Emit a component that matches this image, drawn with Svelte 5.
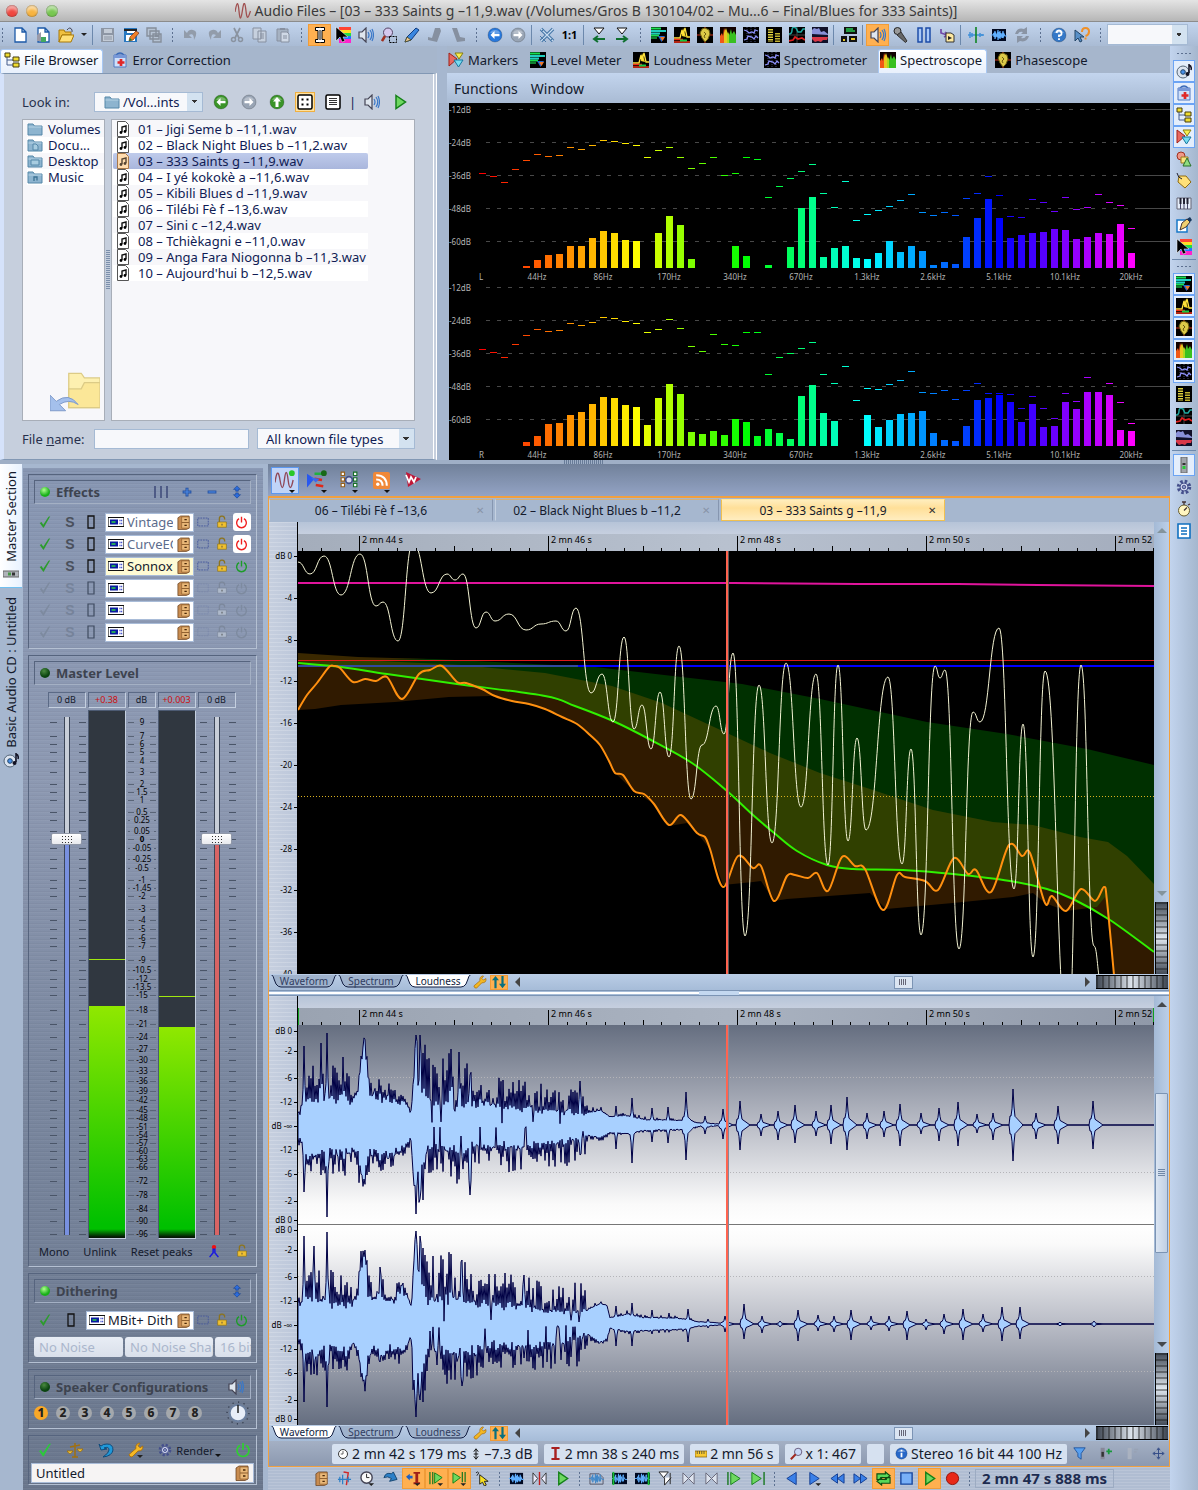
<script>
	// 16x16 artwork, keyed by name
	const meter = '<rect width="16" height="16" fill="#000"/>'
	const speakerPath = '<path d="M1 5h3l4-4v14l-4-4H1z" fill="#dfe6ee" stroke="#445" stroke-width="1.2"/><path d="M10 5q2 3 0 6M12 3q3.500 5 0 10M14 2q3 6 0 12" fill="none" stroke="#3a78c8" stroke-width="1.200"/>'
	const wave = 'M0 8h2l1-2v4l1-6v8l1-5 1 3 1-7v10l1-8v6l1-7v8l1-6 1 5 1-7v7l1-4 1 2h2'
	const disc = color => `<circle cx="8" cy="8" r="7" fill="${color}" stroke="#0003"/><path d="M3 6a5.500 5 0 0 1 10 0z" fill="#fff" opacity=".3"/>`
	const arrowLeft = '<path d="M3.500 8l4-4v2.700h5v2.600h-5V12z" fill="#fff"/>'
	const arrowRight = '<path d="M12.500 8l-4-4v2.700h-5v2.600h5V12z" fill="#fff"/>'
	const page = 'M3 1h7l4 4v10H3z'
	const folder = '<path d="M1 3h5l1.500 2H15v9H1z" fill="#8db4cf" stroke="#5587a8"/><path d="M1.500 6h13" stroke="#b8d4e6"/>'
	const play = 'M4 1.500l9.500 6.500L4 14.500z'
	const green = 'fill="#6ed860" stroke="#148018"'
	const blue = 'fill="#3a80e8" stroke="#123c90"'
	const power = color => `<path d="M5 3.300a6 6 0 1 0 6 0M8 1v7" fill="none" stroke="${color}" stroke-width="1.700"/>`
	const lock = (body, edge) => `<path d="M5 8V4.500a3 3 0 0 1 6-.5v1" fill="none" stroke="${edge}" stroke-width="1.500"/><path d="M3 8h10v6H3z" fill="${body}" stroke="${edge}" stroke-width=".8"/><path d="M7.500 10h1v2h-1z" fill="#444"/>`
	const tick = color => `<path d="M2 9l2-1 2 3 6-9 2-.5-7.500 13H6z" fill="${color}"/>`
	const wrench = '<path d="M2 14.500l-1-2 7-6q-1-4 3-5.500l1 .3-2 2.500 2 2 2.800-1.800q.8 5-4.800 5l-6 6z" fill="#f4b824" stroke="#a86a08" stroke-width=".8"/>'
	const gear = '<circle cx="8" cy="8" r="5.500" fill="none" stroke="#45508c" stroke-width="3.500" stroke-dasharray="2.400 1.920"/><circle cx="8" cy="8" r="4" fill="#dbe0f4" stroke="#45508c"/><circle cx="8" cy="8" r="1.800" fill="#8c96c4" stroke="#45508c"/>'
	const drop = '<path d="M9 13h6l-3 3z" fill="#222"/>'

	const icons = {
		logo: '<path d="M0 9C2-2 3-2 4 8s2 9 3.500-1S10-1 11 8s2 8 4.500 0" fill="none" stroke="#a05050" stroke-width="1.300"/>',
		newFile: `<path d="${page}M10 1v4h4" fill="#fff" stroke="#1d5aa8" stroke-width="1.300"/>`,
		newMontage: `<path d="${page}M10 1v4h4" fill="#fff" stroke="#1d5aa8" stroke-width="1.300"/><path d="M2 8l4-3v9H2z" fill="#9a9aa8"/><path d="M6 10h5v5H6z" fill="#44a860"/>`,
		open: '<path d="M1 3h5l1 2h6v3H4l-3 7z" fill="#f0c040" stroke="#a87808"/><path d="M4 8h12l-3 7H1z" fill="#ffe078" stroke="#a87808"/><path d="M9 3q3-4 5 0v2" fill="none" stroke="#445"/>',
		save: '<path d="M1 1h13v14H1z" fill="#8d96a4"/><path d="M4 2h8v4H4zM3 8h10v6H3z" fill="#c3cbd6"/><path d="M4 10h8M4 12h8" stroke="#8d96a4"/>',
		saveAs: '<path d="M1 1h13v14H1z" fill="#2878c0"/><path d="M4 2h8v4H4zM3 8h9v6H3z" fill="#fff"/><path d="M1 2h13v2H1z" fill="#222"/><path d="M6 14l1-4 6-6 3 2-6 7z" fill="#f08028" stroke="#803010" stroke-width=".7"/><path d="M6 14l1-3 2 2z" fill="#1a8a30"/>',
		saveAll: '<path d="M1 1h9v8H1zM4 4h9v8H4zM7 7h8v8H7z" fill="#b6c3d3" stroke="#858e9b" stroke-width="1.400"/><path d="M9 8h4v2H9z" fill="#858e9b"/>',
		undo: '<path d="M1 3v8h8L6 8q5-3 5 5 5-9-1-10-4-1-6 3z" fill="#929caa"/>',
		redo: '<path d="M15 3v8H7l3-3Q5 5 5 13 0 4 6 3q4-1 6 3z" fill="#929caa"/>',
		cut: '<path d="M5 1l5 10M11 1L6 11" stroke="#8a93a0" stroke-width="1.700"/><circle cx="4.500" cy="12.500" r="2" fill="none" stroke="#8a93a0" stroke-width="1.500"/><circle cx="11.500" cy="12.500" r="2" fill="none" stroke="#8a93a0" stroke-width="1.500"/>',
		copy: '<path d="M1 1h8v11H1zM6 4h8v11H6z" fill="#c6d0de" stroke="#8790a0"/><path d="M8 7h4M8 9h4M8 11h4" stroke="#8790a0"/>',
		paste: '<path d="M2 2h11v12H2z" fill="#a6b2c2" stroke="#8790a0"/><path d="M5 1h5v2H5z" fill="#8790a0"/><path d="M6 5h6l2 2v8H6z" fill="#d0d9e6" stroke="#8790a0"/><path d="M8 9h4M8 11h4" stroke="#8790a0"/>',
		ibeam: '<path d="M3.500.5h4l.5.500.500-.500h4v3H10v9h2.500v3h-4L8 15l-.500.500h-4v-3H6v-9H3.500z" fill="#fff" stroke="#000"/><path d="M8 3v10" stroke="#000"/>',
		rainbow: '<path d="M4 0h12v3H4z" fill="#f43"/><path d="M4 3h12v3H4z" fill="#fd2"/><path d="M4 6h12v3H4z" fill="#2d4"/><path d="M4 9h12v3H4z" fill="#27f"/><path d="M4 12h12v4H4z" fill="#f2c"/><path d="M1 0v14l4-4 2 5 3-1-2-4h5z" fill="#000" stroke="#fff" stroke-width=".5"/>',
		speaker: speakerPath,
		zoom: '<circle cx="7" cy="5.500" r="4.500" fill="#d4c8ee" stroke="#546"/><path d="M4 9l-3 5" stroke="#a03020" stroke-width="2.500"/><path d="M8.500 9.500h7v6h-7z" fill="none" stroke="#000" stroke-dasharray="2 1"/>',
		pencil: '<path d="M1 15l2-5L12 1l3 2-8 10z" fill="#3a86e0" stroke="#103c80"/><path d="M1 15l2-5 4 3z" fill="#f0c890" stroke="#553"/>',
		fadeA: '<path d="M1 10l4 1 3-10h5l1 3-4 11-9-2z" fill="#8690a0"/>',
		fadeB: '<path d="M2 1h5l3 9 5 1v3l-8 1z" fill="#8690a0"/>',
		back: disc('#2878dc') + arrowLeft,
		forward: disc('#98a4b4') + arrowRight,
		backGreen: disc('#3a9428') + arrowLeft,
		up: disc('#3a9428') + '<path d="M8 3l4 4.500H9.500V13h-3V7.500H4z" fill="#fff"/>',
		cross: '<path d="M2 2l12 12M14 2L2 14" stroke="#4878a8" stroke-width="3.500"/><path d="M2 2l12 12M14 2L2 14" stroke="#c8dcf0" stroke-width="1.200"/><path d="M1 9l6 6M2 5l3-3M11 14l3-3" stroke="#4878a8"/>',
		toLeft: '<path d="M3 1h10L8 7z" fill="#fff" stroke="#111"/><path d="M14 12H4M7 9l-4 3 4 3" fill="none" stroke="#107030" stroke-width="2"/>',
		toRight: '<path d="M3 1h10L8 7z" fill="#fff" stroke="#111"/><path d="M2 12h10M9 9l4 3-4 3" fill="none" stroke="#107030" stroke-width="2"/>',
		level: meter + '<path d="M0 1.500h10M0 8.500h8" stroke="#18e050" stroke-width="2"/><path d="M0 4h15M0 6.500h9" stroke="#20d0c0" stroke-width="2"/><path d="M0 11h6" stroke="#108030" stroke-width="2"/><path d="M7 9h7l-3.500 6z" fill="#2068d0"/><path d="M9 10h5l-2.500 4z" fill="#f07828"/>',
		loudness: meter + '<path d="M8 9l1-8 3 9z" fill="#f8d828"/><path d="M0 11h6l2-8 1 5 2-7 2 9h3" fill="none" stroke="#ffe23c" stroke-width="1.300"/><path d="M0 12.500h9M0 15h16" stroke="#f03018" stroke-width="1.600"/><path d="M6 13.500h7" stroke="#18c840" stroke-width="2"/>',
		phase: meter + '<path d="M8 0v16M0 8h16" stroke="#d03018" stroke-width="1"/><path d="M8 1l4 2 1 4-2 5-3 3-3-4-2-5 2-4z" fill="#dcca48" stroke="#6c5c10"/><path d="M7 5l2 2-2 2 1 2" fill="none" stroke="#6c5c10"/>',
		scope: '<rect width="16" height="16" fill="#100"/><path d="M0 16V9l2-3 1 3 1-8 2 5v10z" fill="#f05818"/><path d="M4 16V6l2-5 2 6 1 9z" fill="#e8c820"/><path d="M7 16V8l1-3 2 4v7z" fill="#a8d820"/><path d="M9 16V9l2-7 1 5 2-3 2 4v8z" fill="#38c020"/>',
		spectro: meter + '<path d="M4 0v16M8 0v16M12 0v16" stroke="#444a70" stroke-dasharray="1 1"/><path d="M1 3l3 1 2 2 3-1 2 1 1-3 3 1M1 13l3-1 1-3 4 1 2 2 2-3 2 2" fill="none" stroke="#8c90f8" stroke-width="1.300"/>',
		bars: meter + '<path d="M4.500 2v13" stroke="#dccd3c" stroke-width="5" stroke-dasharray="1.500 1"/><path d="M11.500 6v9" stroke="#c0b030" stroke-width="5" stroke-dasharray="1.500 1"/>',
		scopes: meter + '<path d="M8 0v16M0 8h16" stroke="#444"/><path d="M0 7q3 0 3-4t4-2l2 4h3l2-3h2" fill="none" stroke="#20a8a0" stroke-width="1.500"/><path d="M0 14l4-1 2-3 3 2 4-1 3 2" fill="none" stroke="#e02020" stroke-width="1.700"/>',
		history: '<rect width="16" height="16" fill="#101028"/><path d="M0 7V3l2-2 3 1 2-1 2 4 3-1 4 3v1z" fill="#8890d8"/><path d="M0 10h16l-1 3-4 0-2 2-3-1-3 1-3-3z" fill="#d83848"/>',
		panes: '<path d="M3 0h13v7H3zM0 9h6v6H0zM8 9h8v6H8z" fill="#111"/><path d="M5 2h7M5 4h9" stroke="#28c850" stroke-width="1.300"/><path d="M2 13h2M10 12h4" stroke="#e8c828" stroke-width="2"/>',
		mic: '<circle cx="4.500" cy="4" r="3.500" fill="#999" stroke="#222"/><path d="M4 8l4-3 6 9-1.500 1.500z" fill="#666" stroke="#333"/>',
		pause: '<path d="M2 1h4v14H2zM10 1h4v14h-4z" fill="#a8c8f8" stroke="#1c4ca8" stroke-width="1.500"/>',
		insert: '<path d="M2 2v4l6 2M6 5l3 3-4 2" fill="none" stroke="#7048a8" stroke-width="1.700"/><path d="M7 6h5l3 2v7H7z" fill="#ffe9a0" stroke="#333"/><path d="M9 9l4 2-4 2z" fill="#222"/>',
		split: '<path d="M0 8h16M2 5v6M12 6v4M14 7v2M4 6v4" stroke="#4090d8" stroke-width="1.500"/><path d="M8 0v16" stroke="#18882c" stroke-width="1.700"/>',
		waveBlue: `<rect x="1" y="2" width="14" height="12" fill="#000820"/><path d="${wave}" fill="none" stroke="#60b0ff" stroke-width="1.200"/>`,
		refresh: '<path d="M1 7q2-7 9-5l3-2v7H7l2-2Q5 4 4 7zM15 9q-2 7-9 5l-3 2V9h6l-2 2q4 1 5-2z" fill="#8a94a4"/>',
		help: disc('#3478c8') + '<path d="M5.500 6q.5-2.500 2.500-2.500T10.500 6 8 8.500V10M8 11.300v1.700" fill="none" stroke="#fff" stroke-width="1.800"/>',
		whats: '<path d="M1 3v11l3-3 2 4 2-1-2-4h4z" fill="#5890c8" stroke="#246"/><path d="M8 5q0-4 3.500-4T15 4.500 11.500 9M11.500 10.500v2" fill="none" stroke="#f09028" stroke-width="2"/>',
		tree: '<path d="M3 4v9h7M3 8h6" fill="none" stroke="#445c8c"/><path d="M1 1h5v4H1zM9 5h6v4H9zM9 11h6v4H9z" fill="#f0dc30" stroke="#443c10"/>',
		kit: '<path d="M4 3q4-4 8 0" fill="none" stroke="#3868b8" stroke-width="1.500"/><path d="M2 3h12v12H2z" fill="#cfe0fa" stroke="#5078c0"/><path d="M2 3h12v3H2z" fill="#7898d8"/><path d="M9 7v7M5.500 10.500h7" stroke="#e02828" stroke-width="2.700"/>',
		markers: '<path d="M1 1v13l8-7z" fill="#e86860" stroke="#a02018"/><path d="M7 1h8l-4 6z" fill="#f8f050" stroke="#887c10"/><path d="M6 8h9l-4.500 7z" fill="#78dcf0" stroke="#1878a0"/>',
		cd: '<circle cx="7" cy="9" r="6" fill="#dce4f0" stroke="#567"/><circle cx="7" cy="9" r="2.300" fill="#4a90e8" stroke="#246"/><path d="M13 1v9m0-8q3 1 2 5" fill="none" stroke="#112" stroke-width="1.500"/><circle cx="11.500" cy="11" r="2" fill="#112"/>',
		shapes: '<circle cx="5" cy="5" r="4" fill="#f09888" stroke="#a03020"/><path d="M5 6h7v6H5z" fill="#f8e480" stroke="#98781c"/><path d="M11 7l4 8H7z" fill="#90dc80" stroke="#287028"/>',
		tag: '<path d="M3 3l7 0 5 6-6 6-7-6z" fill="#ffe078" stroke="#906c10"/><path d="M1 0q1 5 5 6" fill="none" stroke="#223"/>',
		keys: '<path d="M1 3h14v11H1z" fill="#e4ecf8" stroke="#667"/><path d="M4.500 3v11M8 3v11M11.500 3v11" stroke="#446"/><path d="M4.500 3v6M8 3v6M11.500 3v6" stroke="#223" stroke-width="2"/>',
		pen: '<path d="M1 3h10v12H1z" fill="#fff" stroke="#1878c8" stroke-width="1.500"/><path d="M4 13l2-7 5-4 3 3-4 5z" fill="#f0d070" stroke="#433"/><path d="M11 2l3-2 2 3-2 2z" fill="#16365c"/>',
		strip: '<path d="M5 0h6v16H5z" fill="#a0a4aa" stroke="#666"/><path d="M6.500 6h3v2h-3z" fill="#333"/><path d="M6.500 9h3v3h-3z" fill="#28c838"/>',
		stripWide: '<path d="M0 5h16v6H0z" fill="#b0b4ba" stroke="#666"/><path d="M9 6.500h3v3H9z" fill="#333"/><path d="M5 6.500h3v3H5z" fill="#489848"/>',
		gear,
		timer: '<circle cx="8" cy="9.500" r="5.500" fill="#fff6c0" stroke="#665c30"/><path d="M8 9.500l3-3M8 4V1M6 1h4M12 4l2-1" stroke="#433" fill="none" stroke-width="1.300"/>',
		notes: '<path d="M2 1h12v14H2z" fill="#fff" stroke="#1070c0" stroke-width="1.600"/><path d="M5 5h6M5 8h6M5 11h6" stroke="#1070c0" stroke-width="1.300"/>',
		grid: '<rect x="1" y="1" width="14" height="14" rx="1.500" fill="#fff" stroke="#000" stroke-width="1.500"/><path d="M4.500 4.500h2v2h-2zM9.500 4.500h2v2h-2zM4.500 9.500h2v2h-2zM9.500 9.500h2v2h-2z"/>',
		list: '<rect x="1" y="1" width="14" height="14" rx="1.500" fill="#fff" stroke="#000" stroke-width="1.500"/><path d="M4 4.500h8M4 6.500h8M4 8.500h8M4 10.500h8" stroke="#333"/>',
		play: `<path d="${play}" ${green} stroke-width="1.500"/>`,
		folder,
		folderDoc: folder + '<path d="M6 7h3l2 2v4H6z" fill="#a8cce0" stroke="#5587a8"/>',
		folderDesk: folder + '<path d="M4 7h8v5H4z" fill="#a8cce0" stroke="#5587a8"/>',
		folderMusic: folder + '<path d="M7 12V8h3v3.500" fill="none" stroke="#3c7294" stroke-width="1.300"/>',
		wav: '<path d="M2.500.500h8l3 3v12h-11z" fill="#fff" stroke="#555"/><path d="M7 11V6l4-1v5" fill="none" stroke="#111" stroke-width="1.400"/><circle cx="6" cy="11.500" r="1.400"/><circle cx="10" cy="10.500" r="1.400"/>',
		wavHot: '<path d="M2.500.500h8l3 3v12h-11z" fill="#ffdcae" stroke="#a87848"/><path d="M7 11V6l4-1v5" fill="none" stroke="#543" stroke-width="1.400"/><circle cx="6" cy="11.500" r="1.400" fill="#543"/><circle cx="10" cy="10.500" r="1.400" fill="#543"/>',
		faders: '<path d="M2 2v12M8 2v12M14 2v12" stroke="#3c4878" stroke-width="1.500"/>',
		plus: '<path d="M8 3v10M3 8h10" stroke="#2450a0" stroke-width="3.400"/><path d="M8 4v8M4 8h8" stroke="#4c88e0" stroke-width="1.400"/>',
		minus: '<path d="M3 8h10" stroke="#2450a0" stroke-width="3.400"/><path d="M4 8h8" stroke="#4c88e0" stroke-width="1.400"/>',
		updown: '<path d="M8 1l4 4H9.500v2h-3V5H4zM8 15l4-4H9.500V9h-3v2H4z" fill="#2c6cdc" stroke="#123c88" stroke-width=".6"/>',
		tick: tick('#2c9c2c'),
		tickBright: tick('#2cc83c'),
		tickOff: tick('#7d8a9f'),
		slot: '<path d="M5 2h6v12H5z" fill="none" stroke="#111" stroke-width="1.300"/>',
		slotOff: '<path d="M5 2h6v12H5z" fill="none" stroke="#3f4b60" stroke-width="1.200"/>',
		rack: '<path d="M0 3.500h16v9H0z" fill="#fff" stroke="#111" stroke-width="1.200"/><path d="M2 5.500h8v5H2z" fill="#0818a0"/><path d="M3.500 8h4" stroke="#30e040" stroke-width="1.400"/><path d="M11.500 6.500h3M11.500 9.500h3" stroke="#2030c0" stroke-width="1.500" stroke-dasharray="1 .7"/>',
		drawers: '<path d="M2 3l3-2h9v13l-3 1.500H2z" fill="#c88c50" stroke="#5c3414" stroke-width=".7"/><path d="M6 2h8v12H6z" fill="#eab878" stroke="#8c5c2c" stroke-width=".7"/><path d="M6 8h8" stroke="#8c5c2c"/><path d="M9 5h2.500M9 11h2.500" stroke="#4a2808" stroke-width="1.300"/>',
		marquee: '<path d="M2 3.500h12v9H2z" fill="none" stroke="#44569c" stroke-dasharray="2 1"/>',
		lock: lock('#f0c030', '#8c7420'),
		lockOff: lock('#aeb9ca', '#7c889c'),
		powerRed: power('#f02020'),
		powerGreen: power('#1c9c28'),
		powerBright: power('#30d030'),
		powerOff: power('#7d8a9f'),
		peaks: '<circle cx="8" cy="3.500" r="2.500" fill="#f01010"/><path d="M3 15l4-5V6h2v4l4 5" fill="none" stroke="#1818e0" stroke-width="1.700"/>',
		knob: '<circle cx="8" cy="8" r="7.300" fill="none" stroke="#2c3444" stroke-width=".8" stroke-dasharray=".8 3"/><circle cx="8" cy="8" r="5.500" fill="#e8eef8" stroke="#6c80a0" stroke-width="1.200"/><path d="M8 2.500v5.500" stroke="#222"/>',
		scales: '<path d="M8 1v14M3 5l10-2M5 15h6" stroke="#a07010" stroke-width="1.500"/><path d="M0 9h6q-3 5-6 0M10 7h6q-3 5-6 0" fill="#ffd848" stroke="#a07010"/>',
		undoBlue: '<path d="M1 2l2 6 6-1-3-1q5-2 5 2 0 3-6 7 9-1 10-7 0-6-6-6-4 0-6 2z" fill="#2098d8" stroke="#104c7c"/>',
		wrench,
		wrenchDrop: wrench + drop,
		waveRed: '<path d="M0 10Q2-4 4 8t3.500 0 3 0 4 0" fill="none" stroke="#904858" stroke-width="1.100"/><circle cx="13.500" cy="2.500" r="2.300" fill="#28c828"/>',
		montage: '<path d="M0 3l6 4-6 7z" fill="#2858f0"/><path d="M6 3h6" stroke="#20b040" stroke-width="2"/><path d="M6 7l6 1M7 12l6 1" stroke="#e02818" stroke-width="2"/><circle cx="13.500" cy="2.500" r="2.300" fill="#186818"/><path d="M3 6l7 1-3 3z" fill="#3868f0"/>',
		batch: '<path d="M1 1h3v3H1zM1 6h3v3H1zM1 11h3v3H1z" fill="#fff" stroke="#986018"/><path d="M12 1h3v3h-3zM12 6h3v3h-3zM12 11h3v3h-3z" fill="#fff" stroke="#187028"/><circle cx="8" cy="8" r="3" fill="#d8dcf0" stroke="#445088" stroke-width="1.500"/>',
		rss: '<rect width="16" height="16" rx="2" fill="#f08838"/><circle cx="4.500" cy="11.500" r="1.600" fill="#fff"/><path d="M3 7q6 0 6 6M3 3q10 0 10 10" fill="none" stroke="#fff" stroke-width="1.900"/>',
		wave: '<path d="M1 0l15 7-13 8z" fill="#c01838"/><path d="M1 3l3 7 2-5 3 5 2-5" fill="none" stroke="#fff" stroke-width="1.800"/>',
		sync: '<path d="M4 15V5M12 1v10" stroke="#087080" stroke-width="2.500"/><path d="M0 6l4-5 4 5zM8 10l4 5 4-5z" fill="#087080"/>',
		clock: '<circle cx="8" cy="8" r="6" fill="#fff" stroke="#333" stroke-width="1.300"/><path d="M8 4v4H5" fill="none" stroke="#333"/>',
		height: '<path d="M8 2v12M5 5l3-4 3 4M5 11l3 4 3-4M5 8h6" fill="none" stroke="#111" stroke-width="1.300"/>',
		caret: '<path d="M3 0h10v2.500H9.500v11H13V16H3v-2.500h3.500v-11H3z" fill="#a82020"/>',
		ruler: '<path d="M0 4h16v8H0z" fill="#f8c830" stroke="#84600c"/><path d="M3 4v4M6 4v4M9 4v4M12 4v4" stroke="#443"/>',
		loupe: '<circle cx="10" cy="6" r="4.500" fill="#c8d8f8" stroke="#546"/><path d="M7 9l-6 6" stroke="#a02820" stroke-width="2.500"/>',
		info: disc('#2868c8') + '<path d="M8 7v5.500M8 3.500v2" stroke="#fff" stroke-width="2.200"/>',
		funnel: '<path d="M1 1h14l-5 7v7l-4-3V8z" fill="#58a0f0" stroke="#184c98"/>',
		addTrack: '<path d="M2 1h5v14H2z" fill="#889"/><path d="M3 6h3v6H3z" fill="#333"/><path d="M12 2v7M9 5.500h7" stroke="#18983c" stroke-width="2.200"/>',
		addTrackOff: '<path d="M2 1h5v14H2z" fill="#aab2c0"/><path d="M10 3h5M10 6h3" stroke="#98a2b4" stroke-width="2"/>',
		move: '<path d="M8 2v12M2 8h12M6 4l2-3 2 3M6 12l2 3 2-3M4 6L1 8l3 2M12 6l3 2-3 2" fill="none" stroke="#344c88" stroke-width="1.200"/>',
		cutWave: '<path d="M7 1l5 1-2 13" fill="none" stroke="#d02828" stroke-width="1.500"/><path d="M1 9h14M3 6v6M6 4v10M12 6v6" stroke="#2c80c8" stroke-width="1.300"/>',
		clockBig: '<circle cx="7" cy="7" r="6" fill="#f8f8f8" stroke="#445" stroke-width="1.500"/><path d="M7 3v4h3" fill="none" stroke="#222"/>' + drop,
		jump: '<path d="M1 7q2-6 8-4l2-2 4 8-8 2 2-3q-4-3-8-1z" fill="#2c80c8" stroke="#144470"/>',
		toCaret: '<path d="M8 1h7v2h-2v9h2v2H8v-2h2V3H8z" fill="#a02018"/><path d="M0 6l4-3v2h3v3H4v2z" fill="#2060c0"/>' + drop,
		preroll: `<path d="M1 1v13M4 1v13" stroke="#187820" stroke-width="1.300"/><path d="M6 2l8 5-8 6z" ${green}/>${drop}`,
		postroll: `<path d="M1 2l8 5-8 6z" ${green}/><path d="M11 1v11M14 1v11" stroke="#187820" stroke-width="1.300"/>${drop}`,
		pointer: '<path d="M5 4v10l3-2 2 4 2-1-2-4h4z" fill="#f8e020" stroke="#222"/><path d="M1 2q2-2 3 0L2 5" fill="none" stroke="#222"/>',
		skip: '<path d="M1 2v12l5-6zM15 2v12l-5-6z" fill="#eef" stroke="#333"/><path d="M8 1v14" stroke="#c02020" stroke-width="1.500"/>',
		skipGray: '<path d="M2 2v12l6-6zM14 2v12L8 8z" fill="#dde3ee" stroke="#667"/>',
		waveGreen: `<rect y="2" width="16" height="12" fill="#000820"/><path d="${wave}" fill="none" stroke="#60b0ff"/><path d="M1.500 1v14" stroke="#18c038" stroke-width="2"/>`,
		waveGreenR: `<rect y="2" width="16" height="12" fill="#000820"/><path d="${wave}" fill="none" stroke="#60b0ff"/><path d="M14.500 1v14" stroke="#18c038" stroke-width="2"/>`,
		waveGray: `<path d="M1 3h10l4 4v7H1z" fill="none" stroke="#556"/><path d="${wave}" fill="none" stroke="#4088c8"/>`,
		flags: '<path d="M1 1h10L6 7zM7 7v8l7-8" fill="#fff" stroke="#222"/><path d="M13 2v12" stroke="#222"/>',
		playFrom: `<path d="M1 1v14" stroke="#187820" stroke-width="1.500"/><path d="M4 1.500L14 8 4 14.500z" ${green}/>`,
		playTo: `<path d="M15 1v14" stroke="#187820" stroke-width="1.500"/><path d="M2 1.500L12 8 2 14.500z" ${green}/>`,
		prev: `<path d="M13 1.500L3 8l10 6.500z" ${blue}/>`,
		next: `<path d="M3 1.500L13 8 3 14.500z" ${blue}/>${drop}`,
		rewind: `<path d="M8 3L1 8l7 5zM15 3L8 8l7 5z" ${blue}/>`,
		fast: `<path d="M8 3l7 5-7 5zM1 3l7 5-7 5z" ${blue}/>`,
		loop: '<path d="M1 9V3h9V1l5 4-5 4V7H5v2zM15 7v6H6v2l-5-4 5-4v2h5V7z" fill="#58d858" stroke="#0c4c10" stroke-width="1.200"/>',
		stop: '<path d="M2 2h12v12H2z" fill="#78b0f8" stroke="#1848a0" stroke-width="1.500"/>',
		record: '<circle cx="8" cy="8" r="6.500" fill="#e82818" stroke="#901008"/>',
		upFolder: '<path d="M6 2h4l1 1.500h5V13H6z" fill="#fdf0b0" stroke="#dccb86" stroke-width=".4"/><path d="M6 7h4l1-2h5v8H6z" fill="#fbe798" stroke="#dccb86" stroke-width=".4"/><path d="M0 9v5h5l-2-2q3-2 6 0Q6 8 2 11z" fill="#a4c0ec" stroke="#7c98c8" stroke-width=".3"/>'
	}

	const toolbar = ['grip', 'newFile', 'newMontage', 'open', 'drop', 'sep', 'save', 'saveAs', 'saveAll', 'grip', 'undo', 'redo', 'cut', 'copy', 'paste', 'grip', '*ibeam', 'rainbow', 'speaker', 'zoom', 'pencil', 'fadeA', 'fadeB', 'grip', 'back', 'forward', 'sep', 'cross', 'ratio', 'sep', 'toLeft', 'toRight', 'grip', 'level', 'loudness', 'phase', 'scope', 'spectro', 'bars', 'scopes', 'history', 'sep', 'panes', 'sep', '*speaker', 'mic', 'pause', 'insert', 'sep', 'split', 'waveBlue', 'refresh', 'grip', 'help', 'whats', 'grip']
	const transport = ['drawers', 'cutWave', 'clockBig', 'jump', '*toCaret', '*preroll', '*postroll', 'pointer', 'grip', 'waveBlue', 'skip', 'play', 'grip', 'waveGray', 'waveGreen', 'waveGreenR', 'flags', 'skipGray', 'skipGray', 'playFrom', 'playTo', 'grip', 'prev', 'next', 'rewind', 'fast', '*loop', 'stop', '*play', 'record', 'grip']
	const rail = ['grip', '*cd', '*kit', '*tree', '*markers', 'shapes', 'tag', 'keys', 'pen', 'rainbow', 'sep', 'grip', '*level', '*loudness', '*phase', '*scope', '*spectro', 'bars', 'scopes', 'history', 'sep', '*strip', 'gear', 'timer', 'notes']
	const meterTabs = [['markers', 'Markers'], ['level', 'Level Meter'], ['loudness', 'Loudness Meter'], ['spectro', 'Spectrometer'], ['scope', 'Spectroscope'], ['phase', 'Phasescope']]

	const places = [['folder', 'Volumes'], ['folderDoc', 'Docu...'], ['folderDesk', 'Desktop'], ['folderMusic', 'Music']]
	const files = ['01 – Jigi Seme b –11,1.wav', '02 – Black Night Blues b –11,2.wav', '03 – 333 Saints g –11,9.wav', '04 – I yé kokokè a –11,6.wav', '05 – Kibili Blues d –11,9.wav', '06 – Tilébi Fè f –13,6.wav', '07 – Sini c –12,4.wav', '08 – Tchièkagni e –11,0.wav', '09 – Anga Fara Niogonna b –11,3.wav', "10 – Aujourd'hui b –12,5.wav"]
	const effects = [
		{ name: 'VintageCompressor', state: 'bypassed' },
		{ name: 'CurveEQ', state: 'bypassed' },
		{ name: 'Sonnox Limiter', state: 'on' },
		{ name: '', state: 'empty' },
		{ name: '', state: 'empty' },
		{ name: '', state: 'empty' }
	]
	const docs = ['06 – Tilébi Fè f –13,6', '02 – Black Night Blues b –11,2', '03 – 333 Saints g –11,9']
	const views = ['Waveform', 'Spectrum', 'Loudness']

	// spectroscope: bar heights and peak positions for 60 bands
	const channels = [
		{
			name: 'L', top: 0,
			bars: [0, 0, 0, 0, 2, 8, 13, 14, 22, 22, 30, 37, 35, 28, 27, 0, 35, 52, 43, 9, 0, 0, 0, 22, 12, 0, 3, 0, 21, 60, 71, 11, 20, 22, 10, 9, 15, 27, 16, 22, 17, 3, 6, 4, 31, 50, 69, 50, 30, 33, 35, 36, 39, 38, 29, 31, 35, 34, 44, 15],
			peaks: [70, 73, 79, 66, 57, 51, 53, 52, 44, 46, 42, 37, 38, 40, 42, 54, 47, 44, 54, 65, 60, 54, 72, 70, 54, 56, 94, 83, 75, 68, 61, 90, 104, 78, 117, 111, 107, 103, 97, 91, 109, 112, 109, 112, 95, 90, 73, 92, 113, 114, 96, 99, 108, 94, 106, 104, 91, 99, 102, 125]
		},
		{
			name: 'R', top: 178,
			bars: [0, 0, 0, 0, 4, 10, 22, 23, 31, 34, 42, 49, 48, 41, 39, 21, 48, 62, 52, 14, 12, 15, 11, 27, 24, 10, 17, 13, 7, 50, 61, 33, 25, 0, 0, 31, 19, 26, 32, 33, 35, 13, 6, 5, 20, 46, 48, 51, 44, 24, 42, 19, 20, 44, 37, 54, 53, 51, 16, 15],
			peaks: [68, 71, 76, 63, 54, 48, 50, 49, 42, 44, 41, 36, 37, 40, 42, 51, 48, 38, 47, 65, 70, 53, 63, 64, 51, 51, 93, 76, 72, 67, 61, 93, 102, 85, 119, 107, 108, 103, 99, 90, 111, 112, 109, 118, 109, 102, 112, 112, 113, 127, 115, 127, 137, 112, 120, 96, 111, 102, 121, 142]
		}
	]
	const frequencies = ['44Hz', '86Hz', '170Hz', '340Hz', '670Hz', '1.3kHz', '2.6kHz', '5.1kHz', '10.1kHz', '20kHz']
	const hueStops = [[0, 0], [14, 60], [23, 115], [35, 180], [47, 240], [59, 300]]
	const bandColor = i => {
		const n = hueStops.findIndex(([stop]) => stop >= i)
		if (n < 1) return 'hsl(0, 100%, 50%)'
		const [a, ha] = hueStops[n - 1]
		const [b, hb] = hueStops[n]
		return `hsl(${ha + (hb - ha) * (i - a) / (b - a)}, 100%, 50%)`
	}

	// fader scale, offsets from the top of the meters
	const scale = [['9', 12], ['7', 26], ['6', 34], ['5', 42], ['4', 51], ['3', 62], ['2', 74], ['1.5', 82], ['1', 90], ['0.5', 102], ['0.25', 110], ['0.05', 121], ['0', 129], ['-0.05', 138], ['-0.25', 149], ['-0.5', 158], ['-1', 170], ['-1.45', 178], ['-2', 186], ['-3', 199], ['-4', 210], ['-5', 219], ['-6', 228], ['-7', 236], ['-9', 250], ['-10.5', 260], ['-12', 269], ['-13.5', 277], ['-15', 285], ['-18', 300], ['-21', 314], ['-24', 327], ['-27', 339], ['-30', 350], ['-33', 361], ['-36', 371], ['-39', 381], ['-42', 390], ['-45', 400], ['-48', 408], ['-51', 417], ['-54', 425], ['-57', 433], ['-60', 441], ['-63', 449], ['-66', 457], ['-72', 471], ['-78', 485], ['-84', 499], ['-90', 511], ['-96', 524]]
	const faderTicks = scale.map(([, y]) => `M2 ${y}.5h7M31 ${y}.5h7`).join('')

	const momentary = [[0, 11], [12, 23], [26, 5], [43, 44], [62, 3], [78, 55], [85, 51], [100, 90], [115, -8], [133, 42], [149, 23], [157, 29], [165, 23], [178, 77], [188, 61], [197, 70], [211, 63], [228, 79], [243, 73], [258, 70], [268, 80], [278, 57], [293, 142], [304, 123], [315, 171], [326, 86], [336, 178], [344, 154], [353, 198], [362, 141], [371, 206], [381, 95], [393, 248], [404, 194], [418, 155], [426, 183], [435, 102], [447, 385], [461, 134], [474, 292], [488, 112], [503, 256], [518, 123], [530, 314], [540, 114], [550, 290], [559, 187], [568, 279], [590, 126], [604, 313], [613, 198], [623, 384], [637, 115], [642, 127], [647, 119], [661, 398], [675, 161], [682, 171], [701, 77], [716, 338], [725, 173], [735, 406], [747, 120], [770, 490], [783, 114], [796, 395], [803, 430]]
	const shortTerm = [[0, 159], [9, 144], [19, 132], [31, 116], [36, 115], [42, 117], [55, 131], [67, 128], [78, 130], [89, 126], [104, 148], [121, 123], [132, 119], [144, 115], [159, 131], [168, 132], [184, 138], [197, 145], [214, 150], [231, 153], [247, 158], [264, 166], [279, 173], [292, 184], [302, 194], [311, 210], [317, 222], [325, 224], [336, 240], [346, 243], [356, 253], [371, 274], [383, 264], [399, 282], [407, 286], [412, 298], [425, 336], [440, 305], [455, 317], [463, 315], [476, 350], [489, 325], [497, 324], [510, 327], [519, 322], [530, 340], [544, 306], [557, 315], [567, 318], [585, 359], [599, 324], [607, 326], [627, 330], [640, 339], [656, 307], [670, 323], [678, 319], [693, 341], [711, 294], [724, 305], [732, 302], [747, 352], [754, 345], [768, 360], [783, 338], [797, 350], [806, 336], [809, 350], [816, 424]]
	const integrated = [[0, 112], [43, 116], [89, 123], [159, 133], [247, 145], [277, 155], [315, 170], [353, 189], [394, 212], [429, 240], [455, 264], [475, 281], [499, 300], [529, 314], [555, 318], [605, 319], [655, 323], [712, 330], [749, 338], [775, 348], [812, 369], [856, 401]]
	const rangeTop = [[0, 106], [137, 108], [297, 116], [444, 133], [522, 148], [629, 171], [709, 183], [789, 198], [856, 214]]
	const rangeMid = [[0, 106], [164, 114], [247, 122], [314, 135], [364, 152], [429, 182], [472, 202], [522, 222], [572, 238], [635, 259], [695, 271], [735, 274], [782, 286], [810, 291], [829, 305], [856, 333]]
	const rangeLow = [[0, 159], [17, 158], [43, 154], [97, 151], [151, 146], [194, 145], [214, 150], [247, 158], [279, 173], [302, 194], [317, 222], [336, 240], [356, 253], [371, 275], [389, 272], [399, 282], [412, 298], [425, 334], [455, 331], [463, 330], [476, 350], [489, 348], [572, 342], [588, 358], [655, 352], [715, 346], [735, 342], [747, 352], [768, 360], [799, 356], [807, 346], [816, 424], [856, 424]]

	const swing = points => points.slice(1).reduce((d, [x, y], i) => {
		const [px, py] = points[i]
		const mid = (px + x) / 2
		return `${d}C${mid} ${py} ${mid} ${y} ${x} ${y}`
	}, `M${points[0]}`)

	const spline = points => points.slice(1).reduce((d, p, i) => {
		const p0 = points[i - 1] || points[i]
		const p1 = points[i]
		const p3 = points[i + 2] || p
		return `${d}C${p1[0] + (p[0] - p0[0]) / 6} ${p1[1] + (p[1] - p0[1]) / 6} ${p[0] - (p3[0] - p1[0]) / 6} ${p[1] - (p3[1] - p1[1]) / 6} ${p}`
	}, `M${points[0]}`)

	const band = (top, bottom) => `M${top.join('L')}L${[...bottom].reverse().join('L')}Z`

	// waveform envelope stops: x, body up, peak up, body down, peak down
	const waves = [
		{
			center: 100,
			env: [[0, 12, 14, 14, 18], [5, 14, 18, 20, 30], [7, 24, 60, 28, 55], [20, 26, 62, 30, 56], [30, 24, 60, 28, 52], [50, 24, 62, 28, 54], [55, 24, 30, 22, 28], [60, 30, 40, 30, 46], [62, 56, 76, 44, 70], [64, 60, 80, 50, 72], [66, 84, 94, 52, 68], [68, 78, 90, 48, 66], [70, 44, 60, 34, 60], [72, 30, 46, 28, 40], [76, 30, 46, 26, 38], [84, 28, 48, 34, 50], [100, 24, 33, 28, 38], [109, 20, 26, 20, 28], [113, 14, 16, 13, 18], [116, 50, 86, 55, 92], [124, 34, 90, 40, 80], [130, 22, 76, 20, 48], [145, 20, 68, 22, 48], [160, 20, 80, 26, 60], [172, 18, 64, 22, 58], [180, 20, 46, 18, 46], [190, 20, 54, 20, 48], [210, 16, 46, 20, 48], [228, 16, 48, 20, 46], [250, 12, 40, 18, 42], [270, 12, 38, 15, 42], [286, 10, 34, 10, 38], [290, 12, 16, 10, 14], [302, 14, 20, 12, 18], [312, 8, 10, 7, 10], [330, 9, 13, 8, 10], [345, 5, 9, 5, 8], [385, 4, 8, 4, 6], [400, 2, 3, 1, 3], [428, 0.5, 1, 0.5, 1]],
			spikes: [[6, 79, 67], [23, 82, 50], [29, 92, 92], [45, 68, 46], [118, 90, 89], [122, 90, 74], [125, 72, 75], [153, 76, 50], [161, 73, 46], [172, 50, 70], [282, 44, 30], [318, 19, 24], [334, 27, 38], [354, 17, 17], [370, 18, 18], [388, 33, 35], [407, 9, 9], [425, 16, 14], [442, 24, 25], [463, 11, 11], [480, 14, 15], [497, 20, 18], [518, 14, 11], [533, 20, 19], [549, 28, 25], [569, 12, 14], [586, 14, 12], [602, 21, 21], [623, 12, 9], [641, 17, 16], [660, 23, 21], [679, 11, 8], [695, 12, 15], [715, 36, 36], [738, 12, 14], [760, 19, 19], [795, 24, 24]]
		},
		{
			center: 299,
			env: [[0, 20, 26, 16, 22], [5, 20, 28, 18, 30], [7, 26, 62, 28, 58], [20, 20, 66, 28, 52], [30, 20, 56, 24, 48], [50, 16, 56, 28, 50], [55, 20, 26, 16, 22], [60, 30, 40, 24, 40], [62, 62, 70, 44, 60], [66, 76, 82, 56, 74], [68, 70, 80, 50, 66], [70, 34, 52, 30, 46], [76, 25, 32, 26, 34], [82, 28, 58, 30, 40], [92, 25, 32, 24, 36], [98, 24, 30, 24, 44], [99, 40, 47, 28, 44], [107, 32, 40, 22, 32], [113, 16, 20, 14, 18], [116, 60, 92, 50, 92], [124, 34, 88, 50, 84], [130, 22, 74, 22, 52], [145, 22, 72, 24, 58], [160, 22, 80, 30, 66], [176, 18, 64, 26, 58], [185, 20, 50, 22, 48], [210, 16, 52, 20, 48], [228, 16, 52, 22, 46], [250, 10, 46, 20, 48], [270, 10, 44, 15, 50], [286, 10, 40, 10, 40], [290, 14, 18, 10, 16], [302, 20, 23, 18, 23], [309, 18, 22, 14, 18], [312, 6, 8, 4, 6], [330, 9, 14, 7, 11], [345, 6, 9, 6, 9], [385, 5, 10, 5, 9], [400, 2, 3, 2, 3], [428, 0.5, 1, 0.5, 1]],
			spikes: [[6, 88, 78], [16, 78, 50], [29, 92, 83], [82, 57, 38], [118, 93, 93], [122, 88, 76], [125, 76, 78], [153, 70, 46], [164, 64, 62], [226, 49, 34], [318, 18, 22], [334, 21, 22], [354, 14, 10], [371, 11, 8], [390, 15, 18], [410, 5, 4], [427, 8, 8], [446, 20, 15], [464, 8, 9], [482, 3, 3], [500, 14, 17], [520, 9, 7], [536, 8, 8], [553, 14, 16], [573, 8, 6], [591, 8, 7], [609, 13, 16], [628, 5, 6], [646, 10, 10], [665, 15, 16], [685, 10, 8], [704, 17, 17], [722, 17, 15], [762, 2, 2], [796, 3, 3]]
		}
	]
	const noise = n => {
		const v = Math.sin(n * 127.1) * 43758.5453
		return v - Math.floor(v)
	}
	const at = (env, x, col) => {
		const n = env.findIndex(stop => stop[0] > x)
		if (n < 0) return 0
		const a = env[n - 1]
		const b = env[n]
		return a[col] + (b[col] - a[col]) * (x - a[0]) / (b[0] - a[0])
	}
	const outline = ({ center, env, spikes }) => {
		const up = []
		const down = []
		for (let x = 0; x <= 856; x++) {
			const [hi, lo] = [1, 3].map(col => {
				const seed = x + col * 911 + center
				const dense = x < 288
				const peak = x % 2 ? Math.pow(noise(seed), dense ? 0.9 : 1.4) : noise(seed) * 0.15
				const body = at(env, x, col) * (dense && x % 2 === 0 ? 0.75 + noise(seed * 5) * 0.35 : 1)
				const dip = x < 286 && x > 125 && noise(seed * 3) > 0.95 ? 0.1 : 1
				let value = (body + (at(env, x, col + 1) - body) * peak) * dip
				for (const spike of spikes) {
					const size = spike[col === 1 ? 1 : 2]
					const d = x - spike[0]
					// sharp attack with a short decaying tail
					const shape = d === 0 ? 1 : d === -1 ? 0.45 : d === 1 ? 0.5 : d < 0 && d > -4 ? 0.25 : d > 0 && d < 10 ? 0.3 * (1 - d / 10) : 0
					value = Math.max(value, size * shape)
				}
				return value
			})
			up.push([x, (center - hi).toFixed(1)])
			down.push([x, (center + lo).toFixed(1)])
		}
		return band(up, down)
	}

	const loudnessLabels = [0, -4, -8, -12, -16, -20, -24, -28, -32, -36, -40].map((db, i) => [db ? db : 'dB 0', 34 + Math.round(i * 41.8)])
	const waveLabels = [0, 199].flatMap(top => [['dB 0', 6], ['-2', 26], ['-6', 53], ['-12', 77], ['dB -∞', 101], ['-12', 125], ['-6', 149], ['-2', 176], ['dB 0', 195]].map(([text, y]) => [text, y + top + 29]))
	const seconds = [44, 46, 48, 50, 52]
	const rulerTicks = Array.from({ length: 46 }, (_, i) => {
		const n = i - 3
		const x = Math.round(61 + n * 18.9)
		return n % 10 === 0 ? '' : `M${x}.5 17v-${n % 5 === 0 ? 5 : 3}`
	}).join('')
</script>

{#snippet icon(name, size = 16)}
	<svg class="icon" width={size} height={size} viewBox="0 0 16 16" aria-hidden="true">{@html icons[name]}</svg>
{/snippet}

{#snippet tools(items, size)}
	{#each items as item}
		{@const name = item.replace('*', '')}
		{#if item === 'grip' || item === 'sep'}
			<span class={item}></span>
		{:else if item === 'drop'}
			<button class="drop" aria-label="open recent"></button>
		{:else if item === 'ratio'}
			<button class="tool ratio">1:1</button>
		{:else}
			<button class="tool" class:active={item !== name} aria-label={name}>{@render icon(name, size)}</button>
		{/if}
	{/each}
{/snippet}

{#snippet groupHead(title, on)}
	<span class="led" class:on></span>
	<h2>{title}</h2>
{/snippet}

{#snippet ruler(edge)}
	<div class="strip"></div>
	<svg class="ruler" class:edge viewBox="0 0 856 17" preserveAspectRatio="xMinYMin slice">
		<path class="minor" d={rulerTicks} />
		{#each seconds as s, i}
			<path class="major" d="M{61 + i * 189}.5 2v15" />
			<text x={64 + i * 189} y="9">2 mn {s}{s < 52 ? ' s' : ''}</text>
		{/each}
	</svg>
{/snippet}

{#snippet axis(labels, height)}
	<svg class="axis" width="29" {height} viewBox="0 0 29 {height}">
		{#each labels as [text, y]}
			<text x="23" y={y + 3}>{text}</text>
			<path d="M25 {y}.5h3" />
		{/each}
		<path d="M28.5 0v{height}" />
	</svg>
{/snippet}

{#snippet viewBar(current)}
	<div class="viewbar">
		{#each views as view}
			<button class="view" class:current={view === current}>
				<svg viewBox="0 0 70 13" preserveAspectRatio="none" aria-hidden="true"><path d="M0 -1q4 0 5 5l2 5q2 3 5 3h46q3 0 5-3l2-5q1-5 5-5" /></svg>
				<span>{view}</span>
			</button>
		{/each}
		<button class="mini" aria-label="settings">{@render icon('wrench', 14)}</button>
		<button class="mini active" aria-label="sync views">{@render icon('sync', 14)}</button>
		<button class="arrow left" aria-label="scroll left"></button>
		<div class="track"><span class="hthumb"></span></div>
		<button class="arrow right" aria-label="scroll right"></button>
		<span class="wheel"></span>
	</div>
{/snippet}

{#snippet fader(label, color)}
	<div class="fader">
		<svg width="38" height="529" viewBox="0 0 38 529" aria-hidden="true"><path d={faderTicks} /></svg>
		<input class={color} type="range" aria-label={label} min="0" max="100" value="77">
	</div>
{/snippet}

{#snippet level(fill, peak)}
	<div class="level">
		<i class="peak" style="top: {peak}%"></i>
		<i class="fill" style="height: {fill}%"></i>
	</div>
{/snippet}

<div class="app">
	<header class="titlebar">
		<span class="lights"><button class="red" aria-label="close"></button><button class="amber" aria-label="minimize"></button><button class="lime" aria-label="zoom"></button></span>
		<h1>{@render icon('logo')} Audio Files – [03 – 333 Saints g –11,9.wav (/Volumes/Gros B 130104/02 – Mu...6 – Final/Blues for 333 Saints)]</h1>
	</header>

	<nav class="toolbar" aria-label="tools">
		{@render tools(toolbar, 16)}
		<select class="preset" aria-label="preset"><option></option></select>
	</nav>

	<div class="body">
		<div class="content">
			<div class="upper">
				<section class="browser">
					<div class="tabs">
						<button class="tab current">{@render icon('tree')} File Browser</button>
						<button class="tab">{@render icon('kit')} Error Correction</button>
					</div>
					<form class="files">
						<div class="lookin">
							<label for="look">Look in:</label>
							<span class="combo">{@render icon('folder')}<select id="look"><option>/Vol...ints</option></select></span>
							<button type="button" aria-label="back">{@render icon('backGreen')}</button>
							<button type="button" aria-label="forward">{@render icon('forward')}</button>
							<button type="button" aria-label="parent folder">{@render icon('up')}</button>
							<button type="button" class="active" aria-label="list view">{@render icon('grid')}</button>
							<button type="button" aria-label="detail view">{@render icon('list')}</button>
							<span class="bar">|</span>
							<button type="button" aria-label="auto play">{@render icon('speaker')}</button>
							<button type="button" aria-label="play">{@render icon('play')}</button>
						</div>
						<div class="lists">
							<ul class="places">
								{#each places as [image, name]}
									<li>{@render icon(image)}{name}</li>
								{/each}
								<li class="parent">{@render icon('upFolder', 50)}</li>
							</ul>
							<span class="vgrip"></span>
							<ul class="names">
								{#each files as file, i}
									<li class:selected={i === 2}>{@render icon(i === 2 ? 'wavHot' : 'wav')}{file}</li>
								{/each}
							</ul>
						</div>
						<div class="filename">
							<label for="name">File <u>n</u>ame:</label>
							<input id="name" type="text">
							<select aria-label="file type"><option>All known file types</option></select>
						</div>
					</form>
				</section>

				<section class="meters">
					<div class="tabs">
						{#each meterTabs as [image, name]}
							<button class="tab" class:current={name === 'Spectroscope'}>{@render icon(image)} {name}</button>
						{/each}
					</div>
					<div class="menu"><button>Functions</button><button>Window</button></div>
					<svg class="spectroscope" viewBox="0 0 721 357" preserveAspectRatio="xMinYMin slice">
						{#each channels as channel}
							<g transform="translate(0 {channel.top})">
								{#each ['-12dB', '-24dB', '-36dB', '-48dB', '-60dB'] as db, i}
									<path class="dash" d="M37 {6 + i * 33}.5H686" />
									<path class="solid" d="M686 {6 + i * 33}.5H721" />
									<text x="0" y={10 + i * 33}>{db}</text>
								{/each}
								{#each channel.bars as height, i}
									<rect x={30 + i * 11} y={165 - height} width="7" {height} fill={bandColor(i)} />
									<rect x={30 + i * 11} y={channel.peaks[i]} width="7" height="1" fill={bandColor(i)} />
								{/each}
								<text x="30" y="177">{channel.name}</text>
								{#each frequencies as hz, i}
									<text class="hz" x={88 + i * 66} y="177">{hz}</text>
								{/each}
							</g>
						{/each}
					</svg>
				</section>
			</div>

			<div class="divider"><span></span></div>

			<div class="lower">
				<div class="sidetabs">
					<button class="current"><span>Master Section</span>{@render icon('stripWide')}</button>
					<button><span>Basic Audio CD : Untitled</span>{@render icon('cd')}</button>
				</div>

				<section class="master">
					<div class="group">
						<div class="head">
							{@render groupHead('Effects', true)}
							<button aria-label="columns">{@render icon('faders')}</button>
							<button aria-label="add">{@render icon('plus', 14)}</button>
							<button aria-label="remove">{@render icon('minus', 14)}</button>
							<button aria-label="resize">{@render icon('updown', 14)}</button>
						</div>
						<div class="slots">
							{#each effects as { name, state }}
								{@const off = state === 'empty'}
								<div class="slot {state}">
									{@render icon(off ? 'tickOff' : 'tick', 14)}
									<b>S</b>
									{@render icon(off ? 'slotOff' : 'slot')}
									<button class="plugin">{@render icon('rack')}<span>{name}</span>{@render icon('drawers', 15)}</button>
									{@render icon('marquee', 14)}
									{@render icon(off ? 'lockOff' : 'lock', 14)}
									<button class="power" aria-label="power">{@render icon(off ? 'powerOff' : state === 'on' ? 'powerGreen' : 'powerRed', 13)}</button>
								</div>
							{/each}
						</div>
					</div>

					<div class="group">
						<div class="head">{@render groupHead('Master Level', false)}</div>
						<div class="desk">
							<output>0 dB</output>
							<output class="over">+0.38</output>
							<output>dB</output>
							<output class="over">+0.003</output>
							<output>0 dB</output>
							{@render fader('Left level', 'azure')}
							{@render level(44, 47)}
							<svg class="scale" width="28" height="529" viewBox="0 0 28 529">
								{#each scale as [db, y]}
									<path d="M-1 {y}.5h{db.length > 3 ? 3 : 7}M29 {y}.5h-{db.length > 3 ? 3 : 7}" />
									<text x="14" y={y + 3} class:zero={db === '0'}>{db}</text>
								{/each}
							</svg>
							{@render level(40, 54)}
							{@render fader('Right level', 'ruby')}
						</div>
						<div class="actions">
							<button>Mono</button><button>Unlink</button><button>Reset peaks</button>
							<button aria-label="peaks">{@render icon('peaks', 14)}</button>
							<button aria-label="lock">{@render icon('lock', 14)}</button>
						</div>
					</div>

					<div class="group">
						<div class="head">
							{@render groupHead('Dithering', true)}
							<button aria-label="resize">{@render icon('updown', 14)}</button>
						</div>
						<div class="slots short">
							<div class="slot on dither">
								{@render icon('tick', 14)}
								{@render icon('slot')}
								<button class="plugin">{@render icon('rack')}<span>MBit+ Dither</span>{@render icon('drawers', 15)}</button>
								{@render icon('marquee', 14)}
								{@render icon('lock', 14)}
								<button class="power" aria-label="power">{@render icon('powerGreen', 13)}</button>
							</div>
						</div>
						<div class="options">
							<button disabled>No Noise</button><button disabled>No Noise Shaping</button><button disabled>16 bit</button>
						</div>
					</div>

					<div class="group">
						<div class="head">
							{@render groupHead('Speaker Configurations', false)}
							<button aria-label="speakers">{@render icon('speaker')}</button>
						</div>
						<div class="speakers">
							{#each [1, 2, 3, 4, 5, 6, 7, 8] as n}
								<button class:current={n === 1}>{n}</button>
							{/each}
							<span class="knob">{@render icon('knob', 24)}</span>
						</div>
					</div>

					<div class="group render">
						<div class="actions">
							<button aria-label="apply">{@render icon('tickBright')}</button>
							<button aria-label="compare">{@render icon('scales')}</button>
							<button aria-label="undo">{@render icon('undoBlue')}</button>
							<button aria-label="settings">{@render icon('wrenchDrop')}</button>
							<button class="go">{@render icon('gear', 14)} Render<i class="caret"></i></button>
							<button aria-label="power">{@render icon('powerBright')}</button>
						</div>
						<div class="session"><input type="text" aria-label="session name" value="Untitled">{@render icon('drawers')}</div>
					</div>
				</section>

				<section class="editor">
					<div class="modes">
						<button class="active" aria-label="audio files">{@render icon('waveRed', 20)}<i class="caret"></i></button>
						<button aria-label="montage">{@render icon('montage', 20)}<i class="caret"></i></button>
						<button aria-label="batch">{@render icon('batch', 18)}<i class="caret"></i></button>
						<button aria-label="podcast">{@render icon('rss', 17)}<i class="caret"></i></button>
						<button aria-label="wavelab">{@render icon('wave', 16)}</button>
					</div>

					<div class="frame">
						<div class="docs">
							{#each docs as doc, i}
								<button class="doc" class:current={i === 2}><span>{doc}</span><i>✕</i></button>
							{/each}
						</div>

						<div class="pane">
							{@render axis(loudnessLabels, 452)}
							<div class="view-area">
								{@render ruler(false)}
								<svg class="plot loudness" viewBox="0 0 856 423" preserveAspectRatio="none">
									<path fill="#003000" d={band(rangeTop, integrated)} />
									<path fill="#304000" d={band(rangeMid, integrated)} />
									<path fill="#301a00" d={band(integrated, rangeLow)} />
									<path fill="#3a2800" d="M0 102L60 106L130 108L0 111Z" />
									<path d="M0 115H856" stroke="#0000ff" stroke-width="2" />
									<path d="M0 115H280" stroke="#3048a0" stroke-width="2" />
									<path d="M0 109.5H856" stroke="#e01818" />
									<path d="M0 245.500H856" stroke="#d8b020" stroke-dasharray="1 2" />
									<path d="M0 32H435L560 33H660L740 34L856 35" stroke="#e0149c" stroke-width="2" />
									<path d={spline(integrated)} stroke="#30f000" stroke-width="2" />
									<path d={spline(shortTerm)} stroke="#ff9010" stroke-width="2" />
									<path d={swing(momentary)} stroke="#f4f4d4" />
									<path d="M430.500 0V423" stroke="#555" />
									<path d="M429 0V423" stroke="#ff6450" stroke-width="2" />
								</svg>
							</div>
							<div class="vscroll">
								<button class="arrow up" aria-label="scroll up"></button>
								<button class="arrow down" aria-label="scroll down"></button>
								<span class="vwheel"></span>
							</div>
						</div>
						{@render viewBar('Loudness')}
						<div class="splitter"><span></span></div>

						<div class="pane">
							{@render axis(waveLabels, 429)}
							<div class="view-area">
								{@render ruler(true)}
								<svg class="plot waveform" viewBox="0 0 856 400" preserveAspectRatio="none">
									<defs>
										<linearGradient id="dusk" x2="0" y2="1"><stop stop-color="#656e80" /><stop offset=".5" stop-color="#b9bcc6" /><stop offset=".9" stop-color="#fafafa" /><stop offset="1" stop-color="#fff" /></linearGradient>
										<linearGradient id="dawn" x2="0" y1="1" y2="0"><stop stop-color="#656e80" /><stop offset=".5" stop-color="#b9bcc6" /><stop offset=".9" stop-color="#fafafa" /><stop offset="1" stop-color="#fff" /></linearGradient>
									</defs>
									<rect width="856" height="199" fill="url(#dusk)" />
									<rect y="199" width="856" height="201" fill="url(#dawn)" />
									<path d="M0 52.500H856M0 147.500H856M0 251.500H856M0 346.500H856" stroke="#b4b4b8" stroke-dasharray="1 2" />
									<path d="M0 199.500H856" stroke="#777" />
									{#each waves as channel}
										<path class="wave" d={outline(channel)} />
									{/each}
									<path d="M430.500 0V400" stroke="#889" />
									<path d="M429 0V400" stroke="#ff6450" stroke-width="2" />
								</svg>
							</div>
							<div class="vscroll">
								<button class="arrow up dark" aria-label="scroll up"></button>
								<div class="vtrack"><span class="vthumb"></span></div>
								<button class="arrow down dark" aria-label="scroll down"></button>
								<span class="vwheel"></span>
							</div>
						</div>
						{@render viewBar('Waveform')}

						<div class="status">
							<button>{@render icon('clock', 12)}2 mn 42 s 179 ms{@render icon('height', 12)}–7.3 dB</button>
							<button>{@render icon('caret', 13)}2 mn 38 s 240 ms</button>
							<button>{@render icon('ruler', 12)}2 mn 56 s</button>
							<button>{@render icon('loupe', 13)}x 1: 467</button>
							<button class="blank" aria-label="blank"></button>
							<button>{@render icon('info', 13)}Stereo 16 bit 44 100 Hz</button>
							<span>{@render icon('funnel', 13)}{@render icon('addTrack', 13)}{@render icon('addTrackOff', 13)}{@render icon('move', 13)}</span>
						</div>
					</div>

					<div class="transport">
						{@render tools(transport, 15)}
						<output>2 mn 47 s 888 ms</output>
					</div>
				</section>
			</div>
		</div>

		<nav class="rail" aria-label="windows">
			{@render tools(rail, 16)}
		</nav>
	</div>
</div>

<style>
	:global(body) {
		background: #a6b7cf;
	}

	.app {
		font-family: "Noto Sans", sans-serif;
		font-size: 13px;
		color: #141a2c;
	}

	button, input, select, output {
		font: inherit;
		color: inherit;
	}

	button {
		display: flex;
		align-items: center;
		justify-content: center;
		margin: 0;
		padding: 0;
		border: 0;
		background: none;
		white-space: nowrap;
	}

	.icon {
		flex: none;
		display: block;
	}

	h1, h2, ul {
		margin: 0;
		padding: 0;
	}

	.titlebar {
		display: flex;
		align-items: center;
		height: 22px;
		background: linear-gradient(#e4e4e4, #b4b4b4);
		box-shadow: inset 0 -1px #8c8c8c;
	}

	.lights {
		display: flex;
		gap: 8px;
		width: 60px;
		padding-left: 6px;
	}

	.lights button {
		width: 12px;
		height: 12px;
		border-radius: 50%;
		box-shadow: inset 0 0 2px #0008, inset 0 4px 3px #fff8;
	}

	.red {
		background: #f04840;
	}

	.amber {
		background: #f8b440;
	}

	.lime {
		background: #78c850;
	}

	h1 {
		display: flex;
		gap: 4px;
		align-items: center;
		flex: 1;
		justify-content: center;
		padding-right: 72px;
		font-size: 14px;
		line-height: 20px;
		font-weight: 400;
		color: #3a3a3a;
		white-space: nowrap;
	}

	.toolbar {
		display: flex;
		align-items: center;
		box-sizing: border-box;
		height: 24px;
		padding-top: 1px;
		background: linear-gradient(#c3d5ee, #a9bbd4);
	}

	.tool {
		flex: none;
		width: 23px;
		height: 22px;
		border: 1px solid transparent;
		box-sizing: border-box;
	}

	.tool.active, .mini.active {
		background: #ffb050;
		border: 1px solid #f09c38;
	}

	.ratio {
		font-size: 11px;
		font-weight: 700;
		color: #000;
	}

	.grip {
		flex: none;
		width: 3px;
		height: 16px;
		margin: 0 5px 0 6px;
		background: radial-gradient(circle, #5c7090 1px, transparent 1px) 0 0 / 3px 4px;
	}

	.grip:first-child {
		margin: 0 4px 0 1px;
	}

	.sep {
		flex: none;
		width: 1px;
		height: 20px;
		margin: 0 3px 0 2px;
		background: #6c88ac;
	}

	.drop {
		width: 13px;
	}

	.drop::after {
		content: "";
		border: 3px solid transparent;
		border-top-color: #222;
		border-bottom: 0;
	}

	select {
		appearance: none;
		border: 1px solid #a5bad4;
		border-radius: 0;
		background: conic-gradient(from -45deg at 50% 100%, #333 90deg, transparent 0) right 5px center / 6px 3px no-repeat, linear-gradient(90deg, transparent calc(100% - 15px), #d3e2f0 0), #f7f8fb;
	}

	.preset {
		width: 81px;
		height: 21px;
	}

	.body {
		display: flex;
	}

	.content {
		flex: 1;
		min-width: 0;
	}

	.upper {
		display: flex;
	}

	.browser {
		display: flex;
		flex-direction: column;
		flex: none;
		width: 437px;
		margin-right: 10px;
	}

	.tabs {
		display: flex;
		align-items: flex-end;
		height: 27px;
		background: #a6b6cc;
	}

	.tab {
		gap: 4px;
		height: 24px;
		padding: 0 5px 3px 4px;
	}

	.browser .tab {
		padding-left: 3px;
		padding-right: 4px;
	}

	.browser .tab + .tab {
		margin-left: 6px;
	}

	.tab.current {
		background: linear-gradient(#fff, #e8f0fc);
		border: 1px solid #a8c8f4;
		border-bottom: 0;
		border-radius: 3px 3px 0 0;
		box-sizing: border-box;
	}

	.files {
		flex: 1;
		display: flex;
		flex-direction: column;
		gap: 7px;
		padding: 17px 18px 10px 18px;
		background: #c6cfdd;
		border: 1px solid #8298b4;
		border-left: 4px solid #d5e2fa;
		border-right: 4px double #fff;
		color: #101c54;
	}

	.lookin {
		display: flex;
		align-items: center;
		height: 21px;
	}

	.lookin label, .filename label {
		flex: none;
		width: 72px;
		color: #26304c;
	}

	.lookin button {
		width: 28px;
		height: 20px;
	}

	.lookin .active {
		width: 20px;
		margin: 0 4px;
		background: #ffe2a0;
		box-shadow: inset 0 0 0 1px #f0b040;
	}

	.bar {
		width: 11px;
		text-align: center;
	}

	.combo {
		display: flex;
		align-items: center;
		width: 109px;
		height: 20px;
		margin-right: 4px;
		background: #f7f8fb;
		border: 1px solid #a5bad4;
		box-sizing: border-box;
	}

	.combo .icon {
		margin-left: 9px;
	}

	.combo select {
		flex: 1;
		min-width: 0;
		height: 18px;
		border: 0;
		padding: 0 0 0 3px;
	}

	.lists {
		display: flex;
		height: 302px;
	}

	ul {
		list-style: none;
		box-sizing: border-box;
		border: 1px solid #a8aeb8;
		background: #f7f7fa;
	}

	li {
		display: flex;
		align-items: center;
		gap: 5px;
		height: 16px;
		white-space: nowrap;
	}

	li:nth-child(even) {
		background: #fff;
	}

	.places {
		display: flex;
		flex-direction: column;
		width: 83px;
		padding: 1px 0 0 4px;
	}

	.places li.parent {
		margin: auto 4px 3px auto;
		height: 50px;
		background: none;
	}

	.vgrip {
		width: 4px;
		height: 40px;
		margin: auto 1px;
		background: repeating-linear-gradient(#7c90ac 0 1px, transparent 1px 2px);
	}

	.names {
		flex: 1;
		padding: 1px 46px 0 1px;
	}

	.names li {
		padding-left: 2px;
		gap: 7px;
	}

	.names li.selected {
		background: linear-gradient(#bfcbeb, #a9b6dc);
		border-radius: 2px;
	}

	.filename {
		display: flex;
		align-items: center;
		height: 21px;
	}

	.filename input {
		width: 155px;
		height: 20px;
		margin-right: 8px;
		border: 1px solid #a5bad4;
		background: #f7f8fb;
		box-sizing: border-box;
	}

	.filename select {
		flex: 1;
		min-width: 0;
		height: 21px;
		padding-left: 8px;
	}

	.meters {
		flex: 1;
		min-width: 0;
	}

	.meters .tab {
		margin-right: 7px;
		padding: 0 4px 3px 1px;
	}

	.menu {
		display: flex;
		gap: 13px;
		height: 30px;
		padding-left: 7px;
		background: linear-gradient(#c3d5ee, #a9bbd4);
		font-size: 14px;
	}

	.spectroscope {
		display: block;
		width: calc(100% - 2px);
		height: 357px;
		margin-left: 2px;
		background: #000;
	}

	.spectroscope text {
		font-size: 8px;
		fill: #b4b4b4;
	}

	.spectroscope .hz {
		text-anchor: middle;
	}

	.dash, .solid {
		stroke: #484848;
	}

	.dash {
		stroke-dasharray: 4 7;
	}

	.divider {
		display: flex;
		height: 4px;
		background: #9fafc6;
	}

	.divider span, .splitter span {
		width: 40px;
		margin-left: 564px;
		background: repeating-linear-gradient(90deg, #687c98 0 1px, transparent 1px 2px);
	}

	.lower {
		display: flex;
	}

	.sidetabs {
		flex: none;
		width: 22px;
	}

	.sidetabs button {
		width: 22px;
		flex-direction: column;
		gap: 4px;
		padding: 9px 0;
	}

	.sidetabs span {
		writing-mode: vertical-rl;
		transform: rotate(180deg);
	}

	.sidetabs .current {
		padding: 7px 0 5px;
		background: linear-gradient(90deg, #fff, #e8f2ff);
		border-bottom: 1px solid #70c0f0;
	}

	.master {
		flex: none;
		display: flex;
		flex-direction: column;
		gap: 6px;
		box-sizing: border-box;
		width: 240px;
		margin: 4px 5px 0 1px;
		padding: 6px 6px 6px 5px;
		background: repeating-linear-gradient(#ffffff0a 0 1px, transparent 1px 3px, #00000008 3px 4px), linear-gradient(#8796b2, #8d99b2 30%, #7a879f 60%, #6a778d);
	}

	.group {
		padding: 5px;
		border: 1px solid;
		border-color: #56647e #b4c0d2 #b4c0d2 #56647e;
	}

	.head {
		display: flex;
		align-items: center;
		gap: 11px;
		height: 24px;
		padding: 0 6px 0 5px;
		box-sizing: border-box;
		border: 1px solid;
		border-color: #56647e #a4b0c4 #a4b0c4 #56647e;
	}

	.led {
		width: 10px;
		height: 10px;
		margin-right: -5px;
		border-radius: 50%;
		background: radial-gradient(circle at 4px 3px, #4a8a40, #0a4410 60%);
	}

	.led.on {
		background: radial-gradient(circle at 4px 3px, #b0ff90, #18b018 60%);
	}

	h2 {
		flex: 1;
		font-size: 13px;
		line-height: 18px;
		font-weight: 700;
		color: #3d434f;
		white-space: nowrap;
	}

	.slots {
		padding-top: 7px;
	}

	.slots.short {
		padding-top: 6px;
	}

	.slot {
		display: grid;
		grid-template-columns: 22px 28px 14px minmax(0, 1fr) 18px 20px 19px;
		align-items: center;
		justify-items: center;
		height: 22px;
	}

	.slot.dither {
		grid-template-columns: 22px 30px minmax(0, 1fr) 18px 20px 19px;
	}

	.slot b {
		font: 700 14px "Liberation Sans", sans-serif;
		color: #4a505c;
	}

	.empty b {
		color: #76839a;
	}

	.empty > .icon:nth-last-child(3) {
		opacity: 0.2;
	}

	.plugin {
		width: calc(100% - 7px);
		height: 19px;
		margin-left: 7px;
		padding: 0 2px;
		gap: 3px;
		background: #fff;
		border: 1px solid #a9bcd8;
		box-sizing: border-box;
	}

	.dither .plugin {
		width: 100%;
		margin: 0;
	}

	.plugin span {
		flex: 1;
		overflow: hidden;
		text-align: left;
	}

	.bypassed .plugin {
		color: #5c6c8c;
	}

	.slot.on:not(.dither) .plugin {
		background: #fffbd4;
	}

	.power {
		width: 18px;
		height: 18px;
	}

	.bypassed .power {
		background: #fff;
		border-radius: 3px;
	}

	.desk {
		display: grid;
		grid-template-columns: 38px 38px 28px 38px 38px;
		column-gap: 2px;
		row-gap: 2px;
		justify-content: center;
		padding: 7px 2px 0 0;
	}

	.desk output {
		height: 16px;
		box-sizing: border-box;
		border: 1px solid;
		border-color: #5b6a86 #c4cfdf #c4cfdf #5b6a86;
		font-size: 9px;
		line-height: 14px;
		text-align: center;
	}

	.desk .over {
		color: #cc1010;
	}

	.fader {
		display: grid;
		justify-items: center;
	}

	.fader svg, .fader input {
		grid-area: 1 / 1;
	}

	.fader path {
		stroke: #4a5568;
	}

	.fader input {
		appearance: none;
		writing-mode: vertical-lr;
		direction: rtl;
		width: 31px;
		height: 518px;
		margin: 7px 0 0;
		background: linear-gradient(#c8ced8 0 120px, var(--tint) 0) center / 4px 100% no-repeat, linear-gradient(#3c4658, #3c4658) center / 6px 100% no-repeat;
	}

	.azure {
		--tint: #7890e0;
	}

	.ruby {
		--tint: #d86464;
	}

	.fader input::-webkit-slider-thumb {
		appearance: none;
		width: 31px;
		height: 12px;
		border: 1px solid #9098a8;
		border-radius: 2px;
		box-sizing: border-box;
		background: repeating-linear-gradient(transparent 0 1px, #f4f4f6 1px 3px) center / 10px 7px no-repeat, repeating-linear-gradient(90deg, #333 0 1px, transparent 1px 3px) center / 10px 7px no-repeat, linear-gradient(#fff, #e8eaee);
	}

	.level {
		position: relative;
		border: 1px solid;
		border-color: #4c5a72 #c4cfdf #c4cfdf #4c5a72;
		background: #303740;
	}

	.peak {
		position: absolute;
		left: 0;
		right: 0;
		height: 1px;
		background: #a0e810;
	}

	.fill {
		position: absolute;
		left: 0;
		right: 0;
		bottom: 0;
		background: linear-gradient(transparent calc(100% - 9px), #041804 calc(100% - 1px)), linear-gradient(#90e800, #00c000 94%);
	}

	.scale text {
		font-size: 8px;
		text-anchor: middle;
	}

	.scale path {
		stroke: #5a6578;
	}

	.zero {
		font-weight: 700;
	}

	.actions {
		display: flex;
		justify-content: space-between;
		height: 20px;
		padding: 2px 2px 0 5px;
		font-size: 11px;
	}

	.options {
		display: grid;
		grid-template-columns: 89px 88px minmax(0, 1fr);
		gap: 2px;
		padding-top: 6px;
	}

	.options button {
		justify-content: flex-start;
		height: 20px;
		padding-left: 5px;
		overflow: hidden;
		border-radius: 3px;
		background: linear-gradient(#e8edf5, #d9dfea);
		font-size: 13px;
		color: #aab6cc;
	}

	.speakers {
		display: flex;
		align-items: center;
		gap: 8px;
		height: 21px;
		padding-top: 3px;
	}

	.speakers button {
		width: 14px;
		height: 14px;
		border-radius: 50%;
		background: #a4a8ac;
		font-size: 12px;
		font-weight: 800;
		color: #222;
	}

	.speakers .current {
		background: #f8a828;
	}

	.knob {
		margin: 0 1px 0 auto;
	}

	.render {
		padding: 2px 2px 1px;
	}

	.render .actions {
		padding: 2px 3px 2px 6px;
	}

	.go {
		gap: 4px;
	}

	.caret {
		border: 3px solid transparent;
		border-top-color: #111;
		border-bottom: 0;
		margin-top: 10px;
		margin-left: -3px;
	}

	.session {
		display: flex;
		align-items: center;
		height: 20px;
		box-sizing: border-box;
		margin-top: 1px;
		padding-right: 3px;
		border: 1px solid #a9bcd8;
		background: #f6f4f4;
	}

	.session input {
		flex: 1;
		min-width: 0;
		border: 0;
		padding: 0 4px;
		background: none;
	}

	.editor {
		flex: 1;
		min-width: 0;
	}

	.modes {
		display: flex;
		align-items: center;
		gap: 4px;
		height: 32px;
		padding-left: 3px;
		background: linear-gradient(#71819a, #93a3c4);
	}

	.modes button {
		width: 28px;
		height: 27px;
	}

	.modes .active {
		background: #c0d4f8;
		box-shadow: inset 0 0 0 1px #5c98f0;
	}

	.modes .caret {
		margin: 22px 0 0 -6px;
	}

	.frame {
		border: 1px solid #f0a040;
		border-top-width: 2px;
	}

	.docs {
		display: flex;
		gap: 2px;
		height: 24px;
		align-items: center;
	}

	.doc {
		width: 224px;
		height: 22px;
		box-sizing: border-box;
		padding: 0 8px 0 0;
		border: 1px solid;
		border-color: #d0b080 #8696b0 transparent #c4d0e0;
		font-size: 12px;
	}

	.doc span {
		flex: 1;
	}

	.doc i {
		margin-left: 4px;
		font-size: 10px;
		font-style: normal;
		color: #8894a8;
	}

	.doc.current {
		background: linear-gradient(#ffedbd, #ffdf98 40%, #ffedc0);
		border-color: #ffe8a0 #f0c050 #f0c050 #f0c050;
	}

	.doc.current i {
		color: #333;
	}

	.pane {
		display: flex;
	}

	.axis {
		flex: none;
		display: block;
		background: repeating-linear-gradient(#ffffff30 0 1px, transparent 1px 4px), linear-gradient(90deg, #c6cfdf, #bcc7da);
	}

	.axis text {
		font-size: 8px;
		text-anchor: end;
	}

	.axis path, .major, .minor {
		stroke: #000;
	}

	.view-area {
		flex: 1;
		min-width: 0;
	}

	.strip {
		height: 12px;
		background: linear-gradient(#b6c4d8, #c6cfdf);
	}

	.ruler {
		display: block;
		width: 100%;
		height: 17px;
		background: linear-gradient(90deg, #a4adbb, #b8c1cf 50%, #a4adbd);
	}

	.ruler.edge {
		background: linear-gradient(90deg, #9aa3b1, #aab3c1 50%, #9099a9);
		box-shadow: inset 1px 0 #10a020, inset -1px 0 #10a020;
	}

	.ruler text {
		font-size: 9px;
	}

	.plot {
		display: block;
		width: 100%;
		fill: none;
	}

	.loudness {
		height: 423px;
		background: #000;
	}

	.waveform {
		height: 400px;
	}

	.wave {
		fill: #a8d0ff;
		stroke: #000044;
		stroke-linejoin: bevel;
	}

	.vscroll {
		display: flex;
		flex-direction: column;
		align-items: center;
		flex: none;
		width: 15px;
		padding-top: 5px;
		background: linear-gradient(90deg, #a4bad6, #bccfe8);
		box-sizing: border-box;
	}

	.arrow {
		width: 11px;
		height: 6px;
	}

	.arrow::after {
		content: "";
		border: 5px solid transparent;
	}

	.arrow.up::after {
		border-bottom-color: #84949c;
		border-top: 0;
	}

	.arrow.down::after {
		border-top-color: #84949c;
		border-bottom: 0;
	}

	.arrow.up.dark::after {
		border-bottom-color: #45484c;
	}

	.arrow.down.dark::after {
		border-top-color: #45484c;
	}

	.arrow.left::after {
		border-width: 5px;
		border-right-color: #444;
		border-left: 0;
	}

	.arrow.right::after {
		border-width: 5px;
		border-left-color: #444;
		border-right: 0;
	}

	.arrow.down {
		margin-top: auto;
	}

	.vtrack {
		flex: 1;
		align-self: stretch;
		padding: 86px 1px 0;
	}

	.vthumb {
		display: block;
		height: 160px;
		box-sizing: border-box;
		border: 1px solid #7c94b4;
		border-radius: 1px;
		background: repeating-linear-gradient(#7088a8 0 1px, transparent 1px 2px) center / 7px 8px no-repeat, linear-gradient(90deg, #dbe5f2, #c0cfe4);
	}

	.vwheel {
		width: 13px;
		height: 72px;
		margin-top: 6px;
		box-sizing: border-box;
		border: solid #000;
		border-width: 0 1px;
		background: repeating-linear-gradient(#1116 0 2px, transparent 2px 6px), linear-gradient(#444c58, #dfe6ee 50%, #444c58);
	}

	.viewbar {
		display: flex;
		align-items: center;
		height: 16px;
		background: linear-gradient(#bacde6, #a6bcd8);
		overflow: hidden;
	}

	.view {
		display: grid;
		width: 70px;
		height: 14px;
		margin-right: -3px;
		align-self: flex-start;
		font-size: 10px;
		line-height: 12px;
		color: #303c60;
	}

	.view svg, .view span {
		grid-area: 1 / 1;
	}

	.view svg {
		width: 70px;
		height: 13px;
		fill: #9fb2cc;
		stroke: #101c40;
	}

	.view.current {
		color: #101c40;
	}

	.view.current svg {
		fill: #fff;
	}

	.mini {
		width: 18px;
		height: 15px;
		margin-left: 1px;
		box-sizing: border-box;
	}

	.arrow.left, .arrow.right {
		width: 8px;
		height: 10px;
		margin: 0 5px;
	}

	.track {
		flex: 1;
		display: flex;
		justify-content: center;
		padding-left: 202px;
	}

	.hthumb {
		width: 19px;
		height: 13px;
		box-sizing: border-box;
		border: 1px solid #7c94b4;
		background: repeating-linear-gradient(90deg, #667 0 1px, transparent 1px 2px) center / 8px 6px no-repeat, #dbe5f2;
	}

	.wheel {
		width: 72px;
		height: 14px;
		box-sizing: border-box;
		margin-right: 1px;
		border: solid #000;
		border-width: 1px 0;
		background: repeating-linear-gradient(90deg, #1116 0 2px, transparent 2px 6px), linear-gradient(90deg, #3c4450, #dfe6ee 50%, #3c4450);
	}

	.splitter {
		display: flex;
		height: 6px;
		box-sizing: border-box;
		border: solid #7c94b4;
		border-width: 1px 0;
		background: linear-gradient(#a6bcd8 1px, #fff 0 3px, #a6bcd8 0);
	}

	.splitter span {
		margin-left: 430px;
		background: #c4d8f0;
	}

	.status {
		display: flex;
		align-items: center;
		gap: 6px;
		height: 25px;
		padding-left: 63px;
		background: linear-gradient(#a4b0c4, #8c99b0);
	}

	.status button {
		gap: 3px;
		height: 20px;
		padding: 0 5px;
		border-radius: 2px;
		background: #d6e1f0;
		font-size: 14px;
	}

	.status .blank {
		width: 17px;
	}

	.status span {
		display: flex;
		flex: 1;
		justify-content: space-between;
		padding: 0 4px 0 0;
	}

	.transport {
		display: flex;
		align-items: center;
		height: 23px;
		padding-left: 42px;
		background: repeating-linear-gradient(#ffffff20 0 1px, transparent 1px 3px), #b0bdd2;
	}

	.transport .tool {
		height: 21px;
	}

	.transport .grip {
		margin: 0 4px;
	}

	.transport output {
		padding: 0 6px;
		border: 1px solid #9cabc2;
		font-size: 15px;
		line-height: 17px;
		font-weight: 700;
		color: #1e2c50;
		white-space: nowrap;
	}

	.rail {
		display: flex;
		flex-direction: column;
		align-items: center;
		flex: none;
		width: 28px;
		padding-top: 4px;
		box-sizing: border-box;
		background: linear-gradient(90deg, #c2d4ee, #a5b7ce);
	}

	.rail .grip {
		width: 16px;
		height: 3px;
		margin: 2px 0 5px;
		background: radial-gradient(circle, #5c7090 1px, transparent 1px) 0 0 / 4px 3px;
	}

	.rail .sep {
		width: 24px;
		height: 1px;
		margin: 1px 0 3px;
	}

	.rail .tool {
		width: 22px;
	}

	.rail .tool.active {
		background: #e4eefc;
		border: 1px solid #6ca4f4;
	}
</style>
